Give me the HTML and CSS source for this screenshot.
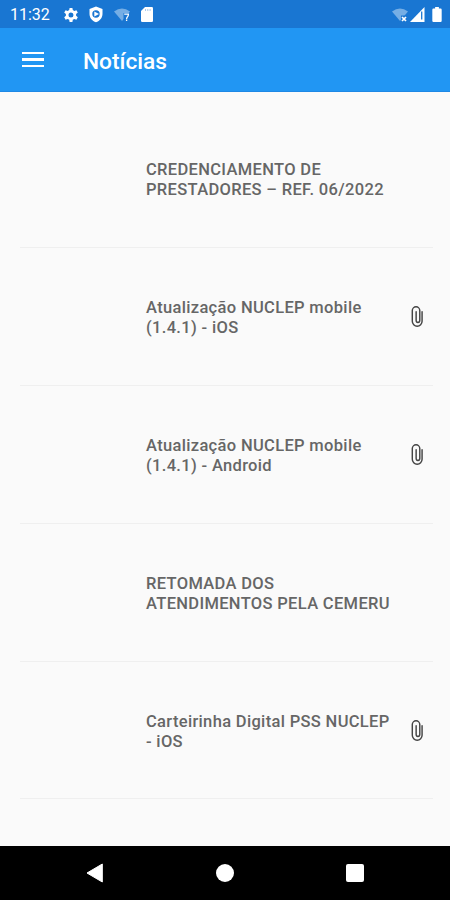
FILE: index.html
```html
<!DOCTYPE html>
<html lang="pt-BR">
<head>
  <meta charset="UTF-8" />
  <meta name="viewport" content="width=device-width, initial-scale=1.0" />
  <title>Notícias</title>
  <link rel="stylesheet" href="styles.css">
</head>
<body>
  <svg class="defs" width="0" height="0">
    <symbol id="clip" viewBox="0 0 14 24">
      <path d="M12.300 7v10a5.100 5.100 0 0 1-10.200 0V5.800a3.900 3.900 0 0 1 7.800 0v10.500a1.900 1.900 0 0 1-3.800 0V7" fill="none" stroke="#444" stroke-width="1.500" stroke-linecap="round" />
    </symbol>
  </svg>

  <div class="status">
    <span class="time">11:32</span>
    <svg class="gear" width="16" height="16" viewBox="0 0 16 16">
      <path d="M6.600 0h2.800l.4 2.200 1.500.9 2.100-.8 1.400 2.400-1.700 1.500v1.700l1.700 1.500-1.400 2.400-2.100-.8-1.500.9-.4 2.200H6.600l-.4-2.200-1.500-.9-2.100.8-1.400-2.400 1.700-1.500V6.200L1.200 4.700l1.400-2.400 2.100.8 1.500-.9zM8 4.500a2.500 2.500 0 1 0 0 5 2.500 2.500 0 0 0 0-5z" transform="translate(0 .9)" fill="#fff" fill-rule="evenodd" />
    </svg>
    <svg class="shield" width="14" height="17" viewBox="0 0 14 17">
      <path d="M7 .5l6.500 2.600v4.600c0 4-2.600 7.300-6.500 8.600C3.100 15 .5 11.700.5 7.700V3.100zM7 4.300a3.700 3.700 0 1 0 0 7.400 3.700 3.700 0 0 0 0-7.400z" fill="#fff" fill-rule="evenodd" />
      <path d="M5.300 5.500L10 8l-4.700 2.500z" fill="#fff" />
    </svg>
    <svg class="wifi" width="17" height="14" viewBox="0 0 17 14">
      <path d="M0 3.500Q8-2.500 16 3.500L8 13z" fill="#75aee5" />
      <path d="M9.500 5H17v9H9.500z" fill="#1976d2" />
      <path d="M10.200 6.200h4.200q0 2-1.200 3-.6.600-.6 1.700M12.600 11.600v1.500" fill="none" stroke="#fff" stroke-width="1.300" />
    </svg>
    <svg class="sd" width="12" height="15" viewBox="0 0 12 15">
      <path d="M4 0h6.800Q12 0 12 1.200v12.600q0 1.200-1.200 1.200H1.200Q0 15 0 13.800V4z" fill="#fff" />
      <path d="M4.500 2v2M6.800 2v2M9.100 2v2" stroke="#a9c9ec" stroke-width="1" />
    </svg>
    <span class="space"></span>
    <svg class="wifi2" width="17" height="14" viewBox="0 0 17 14">
      <path d="M0 3.500Q8-2.500 16 3.500L8 13z" fill="#75aee5" />
      <path d="M9 7.500h7V14H9z" fill="#1976d2" />
      <path d="M10 9l4 4M14 9l-4 4" stroke="#fff" stroke-width="1.700" />
    </svg>
    <svg class="signal" width="15" height="15" viewBox="0 0 15 15">
      <path d="M14.500 0v15H0z" fill="#fff" />
      <path d="M11.700 4.500v8" stroke="#1976d2" stroke-width="1.300" />
    </svg>
    <svg class="battery" width="10" height="15" viewBox="0 0 10 16">
      <path d="M3 0h4v1.700h1.800Q10 1.700 10 3v11.700Q10 16 8.800 16H1.200Q0 16 0 14.700V3q0-1.300 1.200-1.300H3z" fill="#fff" />
    </svg>
  </div>

  <header class="toolbar">
    <div class="menu"><i></i><i></i><i></i></div>
    <h1>Notícias</h1>
  </header>

  <main class="list">
    <div class="item">
      <p>CREDENCIAMENTO DE<br>PRESTADORES – REF. 06/2022</p>
    </div>
    <div class="item">
      <p>Atualização NUCLEP mobile<br>(1.4.1) - iOS</p>
      <svg class="clip"><use href="#clip" /></svg>
    </div>
    <div class="item">
      <p>Atualização NUCLEP mobile<br>(1.4.1) - Android</p>
      <svg class="clip"><use href="#clip" /></svg>
    </div>
    <div class="item">
      <p>RETOMADA DOS<br>ATENDIMENTOS PELA CEMERU</p>
    </div>
    <div class="item">
      <p>Carteirinha Digital PSS NUCLEP<br>- iOS</p>
      <svg class="clip"><use href="#clip" /></svg>
    </div>
  </main>

  <nav class="navbar">
    <svg width="18" height="20" viewBox="0 0 18 20">
      <path d="M16.300 1v18L1 10z" fill="#fff" stroke="#fff" stroke-width="1" stroke-linejoin="round" />
    </svg>
    <span class="home"></span>
    <span class="recent"></span>
  </nav>
</body>
</html>
```

FILE: styles.css
```css
body {
  margin: 0;
  height: 900px;
  display: flex;
  flex-direction: column;
  background: #fafafa;
  font-family: Roboto, sans-serif;
  overflow: hidden;
}

svg { display: block; flex: none; }

.defs { display: none; }

.status {
  height: 28px;
  flex: none;
  display: flex;
  align-items: center;
  box-sizing: border-box;
  padding: 1px 8px 0 10px;
  background: #1976d2;
  color: #fff;
}

.time {
  width: 53px;
  font-size: 16px;
  line-height: 28px;
  padding-top: 1px;
}

.gear { margin-right: 10px; }
.shield { margin-right: 11px; }
.wifi { margin-right: 10px; }
.space { flex: 1; }
.wifi2 { margin-right: 1px; }
.signal { margin-right: 7px; }

.toolbar {
  height: 64px;
  flex: none;
  display: flex;
  align-items: center;
  box-sizing: border-box;
  padding: 0 22px;
  background: #2196f3;
  border-bottom: 1px solid #1e88e5;
}

.menu {
  width: 22px;
  margin: 0 39px 0 0;
  display: flex;
  flex-direction: column;
  gap: 4px;
}

.menu i {
  height: 2.400px;
  background: #fff;
}

h1 {
  margin: 4px 0 0;
  font-size: 22.700px;
  font-weight: 500;
  color: #fff;
}

.list {
  flex: 1;
  padding: 18px 17px 0 20px;
}

.item {
  height: 137.900px;
  box-sizing: border-box;
  display: flex;
  align-items: center;
  padding: 1px 9px 0 126px;
  border-bottom: 1px solid #efefef;
}

.item p {
  flex: 1;
  margin: 0;
  padding-top: 2px;
  font-size: 16.500px;
  font-weight: 500;
  line-height: 20px;
  letter-spacing: 0.330px;
  white-space: nowrap;
  color: #666;
}

.clip {
  width: 14px;
  height: 23px;
}

.navbar {
  height: 54px;
  flex: none;
  display: flex;
  align-items: center;
  justify-content: space-between;
  box-sizing: border-box;
  padding: 0 86px;
  background: #000;
}

.home {
  width: 18px;
  height: 18px;
  border-radius: 50%;
  background: #fff;
}

.recent {
  width: 18px;
  height: 18px;
  border-radius: 2px;
  background: #fff;
}
```
